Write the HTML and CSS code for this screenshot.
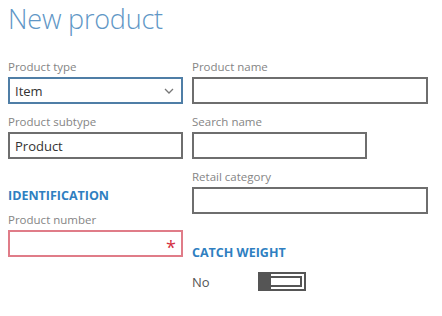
FILE: index.html
```html
<!DOCTYPE html>
<html>
<head>
  <link rel="stylesheet" href="styles.css">
</head>
<body>
  <div class="page">
    <h1 class="title">New product</h1>
    <div class="columns">
      <div class="column left">
        <div class="field">
          <label>Product type</label>
          <div class="box select">
            <span>Item</span>
            <svg class="chevron" width="10" height="6" viewBox="0 0 10 6"><path d="M1 1 L5 5 L9 1" fill="none" stroke="#777" stroke-width="1.3"/></svg>
          </div>
        </div>
        <div class="field">
          <label>Product subtype</label>
          <div class="box"><span>Product</span></div>
        </div>
        <h2 class="section">IDENTIFICATION</h2>
        <div class="field">
          <label>Product number</label>
          <div class="box required"><span class="star">*</span></div>
        </div>
      </div>
      <div class="column right">
        <div class="field">
          <label>Product name</label>
          <div class="box wide"></div>
        </div>
        <div class="field">
          <label>Search name</label>
          <div class="box"></div>
        </div>
        <div class="field">
          <label>Retail category</label>
          <div class="box wide"></div>
        </div>
        <h2 class="section">CATCH WEIGHT</h2>
        <div class="toggle-row">
          <span class="toggle-text">No</span>
          <div class="toggle"><div class="thumb"></div><div class="track"></div></div>
        </div>
      </div>
    </div>
  </div>
</body>
</html>
```

FILE: styles.css
```css
body {
  margin: 0;
  background: #fff;
  font-family: 'Open Sans', 'Noto Sans', sans-serif;
}

.page {
  padding: 0 8px;
}

.title {
  margin: 0;
  font-size: 27px;
  font-weight: 300;
  line-height: 38px;
  color: #5f97c6;
  letter-spacing: -0.2px;
}

.columns {
  display: flex;
  gap: 8px;
  margin-top: 21px;
}

.column {
  display: flex;
  flex-direction: column;
}

.left {
  width: 176px;
}

.right {
  width: 236px;
}

.field {
  display: flex;
  flex-direction: column;
  margin-bottom: 10px;
}

.field label {
  font-size: 11.5px;
  line-height: 16px;
  color: #858585;
  margin-bottom: 2px;
}

.box {
  box-sizing: border-box;
  width: 175px;
  height: 27px;
  border: 2px solid #6e6e6e;
  display: flex;
  align-items: center;
  padding: 0 5px;
  font-size: 13px;
  color: #333;
}

.box.wide {
  width: 236px;
}

.select {
  border-color: #4f7ea6;
  justify-content: space-between;
}

.chevron {
  margin-right: 2px;
}

.required {
  border-color: #e07c88;
  justify-content: flex-end;
}

.star {
  color: #d42f40;
  font-size: 18px;
  line-height: 18px;
  margin-top: 6px;
}

.section {
  margin: 19px 0 0;
  font-size: 12.5px;
  font-weight: 700;
  line-height: 16px;
  color: #2f7fc1;
  height: 24px;
}

.right .section {
  margin-top: 21px;
  height: 27px;
}

.toggle-row {
  display: flex;
  align-items: center;
  gap: 48px;
}

.toggle-text {
  font-size: 13px;
  color: #555;
}

.toggle {
  box-sizing: border-box;
  width: 48px;
  height: 19px;
  border: 2px solid #555;
  background: #fff;
  display: flex;
  padding: 2px 2px 2px 0;
}

.thumb {
  width: 11px;
  margin: -2px 0;
  background: #555;
}

.track {
  flex: 1;
  border: 2px solid #555;
  border-left: none;
}
```
